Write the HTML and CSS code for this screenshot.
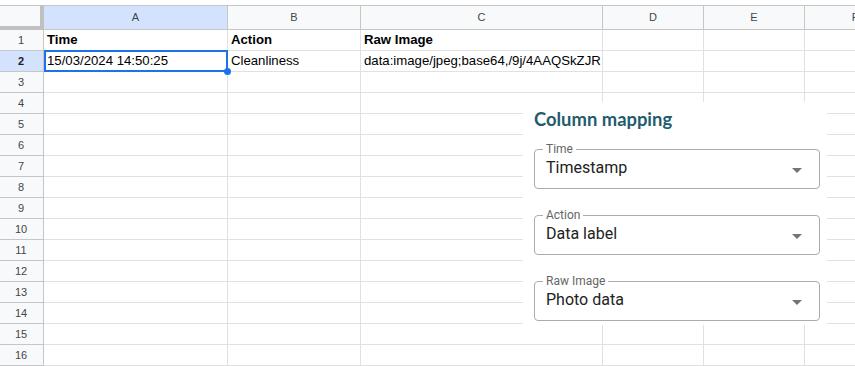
FILE: index.html
```html
<!DOCTYPE html>
<html>
<head>
<meta charset="utf-8">
<link rel="stylesheet" href="styles.css">
</head>
<body>
<div class="sheet">
  <div class="corner"></div><div class="ch sel-h">A</div><div class="ch">B</div><div class="ch">C</div><div class="ch">D</div><div class="ch">E</div><div class="ch">F</div>
  <div class="rh">1</div><div class="c b">Time</div><div class="c b">Action</div><div class="c b">Raw Image</div><div class="c"></div><div class="c"></div><div class="c"></div>
  <div class="rh sel-r">2</div><div class="c sel">15/03/2024 14:50:25</div><div class="c">Cleanliness</div><div class="c">data:image/jpeg;base64,/9j/4AAQSkZJR</div><div class="c"></div><div class="c"></div><div class="c"></div>
  <div class="rh">3</div><div class="c"></div><div class="c"></div><div class="c"></div><div class="c"></div><div class="c"></div><div class="c"></div>
  <div class="rh">4</div><div class="c"></div><div class="c"></div><div class="c"></div><div class="c"></div><div class="c"></div><div class="c"></div>
  <div class="rh">5</div><div class="c"></div><div class="c"></div><div class="c"></div><div class="c"></div><div class="c"></div><div class="c"></div>
  <div class="rh">6</div><div class="c"></div><div class="c"></div><div class="c"></div><div class="c"></div><div class="c"></div><div class="c"></div>
  <div class="rh">7</div><div class="c"></div><div class="c"></div><div class="c"></div><div class="c"></div><div class="c"></div><div class="c"></div>
  <div class="rh">8</div><div class="c"></div><div class="c"></div><div class="c"></div><div class="c"></div><div class="c"></div><div class="c"></div>
  <div class="rh">9</div><div class="c"></div><div class="c"></div><div class="c"></div><div class="c"></div><div class="c"></div><div class="c"></div>
  <div class="rh">10</div><div class="c"></div><div class="c"></div><div class="c"></div><div class="c"></div><div class="c"></div><div class="c"></div>
  <div class="rh">11</div><div class="c"></div><div class="c"></div><div class="c"></div><div class="c"></div><div class="c"></div><div class="c"></div>
  <div class="rh">12</div><div class="c"></div><div class="c"></div><div class="c"></div><div class="c"></div><div class="c"></div><div class="c"></div>
  <div class="rh">13</div><div class="c"></div><div class="c"></div><div class="c"></div><div class="c"></div><div class="c"></div><div class="c"></div>
  <div class="rh">14</div><div class="c"></div><div class="c"></div><div class="c"></div><div class="c"></div><div class="c"></div><div class="c"></div>
  <div class="rh">15</div><div class="c"></div><div class="c"></div><div class="c"></div><div class="c"></div><div class="c"></div><div class="c"></div>
  <div class="rh">16</div><div class="c"></div><div class="c"></div><div class="c"></div><div class="c"></div><div class="c"></div><div class="c"></div>
</div>

<div class="panel">
  <div class="title">Column mapping</div>
  <fieldset class="field">
    <legend>Time</legend>
    <div class="row"><span class="val">Timestamp</span><svg class="arrow" viewBox="0 0 24 24" width="24" height="24"><path d="M7 10l5 5 5-5z"/></svg></div>
  </fieldset>
  <fieldset class="field">
    <legend>Action</legend>
    <div class="row"><span class="val">Data label</span><svg class="arrow" viewBox="0 0 24 24" width="24" height="24"><path d="M7 10l5 5 5-5z"/></svg></div>
  </fieldset>
  <fieldset class="field">
    <legend>Raw Image</legend>
    <div class="row"><span class="val">Photo data</span><svg class="arrow" viewBox="0 0 24 24" width="24" height="24"><path d="M7 10l5 5 5-5z"/></svg></div>
  </fieldset>
</div>
</body>
</html>
```

FILE: styles.css
```css
html, body {
  margin: 0;
  padding: 0;
  background: #ffffff;
  overflow: hidden;
  width: 855px;
  height: 366px;
}

body {
  position: relative;
  font-family: "Liberation Sans", Arial, sans-serif;
}

.sheet {
  margin-top: 5px;
  display: grid;
  grid-template-columns: 44px 184px 133px 242px 101px 101px 101px;
  grid-template-rows: 25px repeat(16, 21px);
  width: 906px;
}

.corner {
  box-sizing: border-box;
  background: #f8f9fa;
  border-top: 1px solid #c4c7c5;
  border-right: 4px solid #c0c0c0;
  border-bottom: 4px solid #c0c0c0;
}

.ch {
  box-sizing: border-box;
  background: #f8f9fa;
  border-top: 1px solid #c4c7c5;
  border-right: 1px solid #c4c7c5;
  border-bottom: 1px solid #c4c7c5;
  font-size: 11px;
  line-height: 23px;
  text-align: center;
  color: #444746;
}

.ch.sel-h {
  background: #d3e3fd;
}

.rh {
  box-sizing: border-box;
  background: #f8f9fa;
  border-right: 1px solid #c4c7c5;
  border-bottom: 1px solid #c4c7c5;
  font-size: 11px;
  line-height: 20px;
  text-align: center;
  color: #444746;
  padding-right: 1px;
}

.rh.sel-r {
  background: #d3e3fd;
  font-weight: bold;
  color: #1f1f1f;
}

.c {
  box-sizing: border-box;
  border-right: 1px solid #e1e1e1;
  border-bottom: 1px solid #e1e1e1;
  padding: 0 0 0 3px;
  font-size: 13.2px;
  line-height: 20px;
  color: #000000;
  white-space: nowrap;
  overflow: hidden;
}

.c.b {
  font-weight: bold;
}

.c.sel {
  position: relative;
  overflow: visible;
}

.c.sel::after {
  content: "";
  position: absolute;
  top: -1px;
  left: 0;
  right: -1px;
  bottom: -1px;
  border: 2px solid #1a73e8;
  box-sizing: border-box;
}

.c.sel::before {
  content: "";
  position: absolute;
  right: -4px;
  bottom: -4px;
  width: 7px;
  height: 7px;
  border-radius: 50%;
  background: #1a73e8;
  z-index: 2;
}

/* Overlay panel */
.panel {
  position: absolute;
  left: 523px;
  top: 102px;
  width: 304px;
  height: 223px;
  box-sizing: border-box;
  background: #ffffff;
  padding: 5px 7px 0 11px;
  z-index: 5;
  display: flex;
  flex-direction: column;
}

.title {
  font-family: Lato, "Open Sans", sans-serif;
  font-weight: 700;
  font-size: 18.4px;
  line-height: 24px;
  color: #1f5c6e;
  margin-bottom: 12px;
}

.field {
  margin: 0 0 20px 0;
  padding: 1px 8px 8px 8px;
  border: 1px solid #ababab;
  border-radius: 4px;
  width: 286px;
  box-sizing: border-box;
  min-width: 0;
}

.field legend {
  padding: 0 3px;
  font-family: Roboto, sans-serif;
  font-size: 12px;
  line-height: 12px;
  color: #666666;
}

.row {
  display: flex;
  align-items: flex-start;
  justify-content: space-between;
  height: 24px;
}

.val {
  padding-left: 3px;
  font-family: Roboto, sans-serif;
  font-size: 16px;
  line-height: 24px;
  color: #222222;
}

.arrow {
  display: block;
  margin-top: 2px;
  margin-right: 2px;
  fill: #757575;
}
```
